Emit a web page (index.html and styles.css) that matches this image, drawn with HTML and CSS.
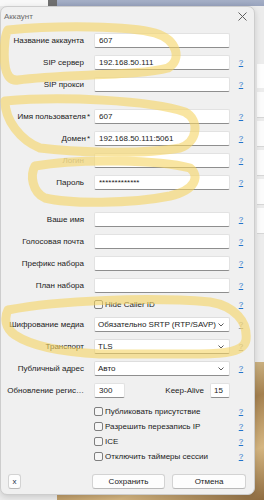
FILE: index.html
```html
<!DOCTYPE html>
<html lang="ru">
<head>
    <meta charset="UTF-8">
    <meta name="viewport" content="width=device-width, initial-scale=1.0">
    <title>Аккаунт</title>
    <link rel="stylesheet" href="styles.css">
</head>
<body>
    <div class="dialog">
        <div class="titlebar">
            <span class="title">Аккаунт</span>
            <svg class="close" width="9" height="9" viewBox="0 0 9 9">
                <path d="M0.5 0.5 L8.5 8.5 M8.5 0.5 L0.5 8.5" stroke="#5f5f5f" stroke-width="1"/>
            </svg>
        </div>

        <div class="form">
            <div class="row">
                <label class="lbl">Название аккаунта</label>
                <input class="inp" type="text" value="607">
                <span class="help"></span>
            </div>
            <div class="row">
                <label class="lbl">SIP сервер</label>
                <input class="inp" type="text" value="192.168.50.111">
                <a class="help" href="#">?</a>
            </div>
            <div class="row">
                <label class="lbl">SIP прокси</label>
                <input class="inp" type="text" value="">
                <a class="help" href="#">?</a>
            </div>

            <div class="row group-user">
                <label class="lbl">Имя пользователя<span class="req">*</span></label>
                <input class="inp" type="text" value="607">
                <a class="help" href="#">?</a>
            </div>
            <div class="row">
                <label class="lbl">Домен<span class="req">*</span></label>
                <input class="inp" type="text" value="192.168.50.111:5061">
                <a class="help" href="#">?</a>
            </div>
            <div class="row">
                <label class="lbl disabled">Логин</label>
                <input class="inp" type="text" value="">
                <a class="help" href="#">?</a>
            </div>
            <div class="row">
                <label class="lbl">Пароль</label>
                <input class="inp" type="text" value="*************">
                <a class="help" href="#">?</a>
            </div>

            <div class="row group-extra">
                <label class="lbl">Ваше имя</label>
                <input class="inp" type="text" value="">
                <a class="help" href="#">?</a>
            </div>
            <div class="row">
                <label class="lbl">Голосовая почта</label>
                <input class="inp" type="text" value="">
                <a class="help" href="#">?</a>
            </div>
            <div class="row">
                <label class="lbl">Префикс набора</label>
                <input class="inp" type="text" value="">
                <a class="help" href="#">?</a>
            </div>
            <div class="row">
                <label class="lbl">План набора</label>
                <input class="inp" type="text" value="">
                <a class="help" href="#">?</a>
            </div>

            <div class="row short">
                <span class="lbl"></span>
                <label class="check"><span class="box"></span>Hide Caller ID</label>
                <a class="help" href="#">?</a>
            </div>
            <div class="row after-check">
                <label class="lbl">Шифрование медиа</label>
                <div class="select"><span>Обязательно SRTP (RTP/SAVP)</span><svg width="6" height="4" viewBox="0 0 6 4"><path d="M0.5 0.5 L3 3 L5.5 0.5" fill="none" stroke="#5a5a5a"/></svg></div>
                <span class="help off">?</span>
            </div>
            <div class="row">
                <label class="lbl">Транспорт</label>
                <div class="select"><span>TLS</span><svg width="6" height="4" viewBox="0 0 6 4"><path d="M0.5 0.5 L3 3 L5.5 0.5" fill="none" stroke="#5a5a5a"/></svg></div>
                <span class="help off">?</span>
            </div>
            <div class="row">
                <label class="lbl">Публичный адрес</label>
                <div class="select"><span>Авто</span><svg width="6" height="4" viewBox="0 0 6 4"><path d="M0.5 0.5 L3 3 L5.5 0.5" fill="none" stroke="#5a5a5a"/></svg></div>
                <a class="help" href="#">?</a>
            </div>
            <div class="row">
                <label class="lbl" title="Обновление регистрации">Обновление регис…</label>
                <div class="pair">
                    <input class="inp small" type="text" value="300">
                    <label class="ka">Keep-Alive</label>
                    <input class="inp tiny" type="text" value="15">
                </div>
                <span class="help"></span>
            </div>

            <div class="checks">
                <div class="row short">
                    <span class="lbl"></span>
                    <label class="check"><span class="box"></span>Публиковать присутствие</label>
                    <a class="help" href="#">?</a>
                </div>
                <div class="row short">
                    <span class="lbl"></span>
                    <label class="check"><span class="box"></span>Разрешить перезапись IP</label>
                    <a class="help" href="#">?</a>
                </div>
                <div class="row short">
                    <span class="lbl"></span>
                    <label class="check"><span class="box"></span>ICE</label>
                    <a class="help" href="#">?</a>
                </div>
                <div class="row short">
                    <span class="lbl"></span>
                    <label class="check"><span class="box"></span>Отключить таймеры сессии</label>
                    <a class="help" href="#">?</a>
                </div>
            </div>
        </div>

        <div class="footer">
            <button class="btn btn-x">x</button>
            <button class="btn btn-save">Сохранить</button>
            <button class="btn">Отмена</button>
        </div>
    </div>

    <!-- marker highlights drawn over the screenshot -->
    <svg class="marker" width="264" height="500" viewBox="0 0 264 500">
        <g fill="none" stroke="#f6d563" stroke-width="9" stroke-linecap="round" stroke-linejoin="round" opacity="0.6">
            <path d="M8 30 C60 25, 130 26, 155 33 C178 40, 182 60, 168 68 C140 76, 60 74, 18 80 C4 82, 3 60, 5 40 C6 34, 7 31, 8 30"/>
            <path d="M5 101 C60 96, 150 100, 185 112 C200 120, 198 142, 180 148 C140 155, 70 152, 40 148 C20 140, 5 120, 5 101"/>
            <path d="M35 166 C80 158, 160 160, 190 168 C200 176, 196 190, 170 196 C130 204, 70 204, 45 198 C32 192, 30 175, 35 166"/>
            <path d="M8 310 C60 300, 150 297, 210 302 C235 306, 248 322, 246 340 C244 352, 225 354, 200 354 L100 354 C60 352, 30 345, 15 335 C5 328, 4 318, 8 310"/>
        </g>
    </svg>
</body>
</html>
```

FILE: styles.css
```css
* {
    box-sizing: border-box;
    margin: 0;
    padding: 0;
}

body {
    width: 264px;
    height: 500px;
    overflow: hidden;
    font-family: "Liberation Sans", Arial, sans-serif;
    font-size: 8px;
    color: #1b1b1b;
    background:
        linear-gradient(#f8f8f8, #f8f8f8) 0 0 / 48px 6px no-repeat,
        linear-gradient(#707070, #707070) 48px 0 / 9px 6px no-repeat,
        linear-gradient(#a5afc6, #98a3bd) 57px 0 / 207px 6px no-repeat,
        linear-gradient(#fdfdfd, #fdfdfd) 257px 64px / 7px 24px no-repeat,
        repeating-linear-gradient(#fbfbfb 0 25px, #d6d6d6 25px 26px, #ebebeb 26px 29px) 257px 92px / 7px 145px no-repeat,
        linear-gradient(160deg, #c7a46c 0%, #e2cf9f 25%, #a4804f 50%, #d5b681 75%, #8e6b40 100%) 57px 362px / 207px 138px no-repeat,
        #ececec;
}

.dialog {
    margin-top: 6px;
    width: 255px;
    height: 489px;
    background-color: #f0f0f0;
    border: 1px solid #cdcdcd;
    border-radius: 7px;
    box-shadow: 0 2px 6px rgba(0,0,0,0.15);
    display: flex;
    flex-direction: column;
}

.titlebar {
    height: 18px;
    display: flex;
    align-items: center;
    justify-content: space-between;
    padding: 0 7px 0 3px;
}

.title {
    color: #6c6c6c;
}

.form {
    display: flex;
    flex-direction: column;
    gap: 7px;
    padding: 8px 0 0 5px;
}

.row {
    display: flex;
    align-items: center;
    height: 15px;
}

.row.short {
    height: 9px;
}

.group-user {
    margin-top: 10px;
}

.group-extra {
    margin-top: 15px;
}

.after-check {
    margin-top: 1px;
}

.lbl {
    width: 78px;
    margin-right: 10px;
    text-align: right;
    white-space: nowrap;
}

.lbl.disabled {
    color: #a9a9a9;
}

.req {
    margin-right: -6px;
    padding-left: 1px;
}

.inp {
    width: 136px;
    height: 15px;
    background-color: #fff;
    border: 1px solid #e2e2e2;
    border-bottom-color: #8e8e8e;
    border-radius: 2px;
    padding: 0 4px;
    font: inherit;
    color: #1b1b1b;
    outline: none;
}

.inp.small {
    width: 31px;
}

.inp.tiny {
    width: 20px;
    padding: 0 3px;
}

.pair {
    width: 136px;
    display: flex;
    align-items: center;
}

.ka {
    margin-left: auto;
    margin-right: 6px;
}

.select {
    width: 136px;
    height: 15px;
    background-color: #fff;
    border: 1px solid #dedede;
    border-bottom-color: #8e8e8e;
    border-radius: 2px;
    padding: 0 5px 0 3px;
    display: flex;
    align-items: center;
    justify-content: space-between;
    white-space: nowrap;
}

.help {
    width: 22px;
    text-align: center;
    color: #2174cc;
    text-decoration: underline;
}

.help.off {
    color: #a6a6a6;
}

.check {
    width: 136px;
    display: flex;
    align-items: center;
    white-space: nowrap;
}

.box {
    width: 9px;
    height: 9px;
    margin-right: 2px;
    background-color: #f6f6f6;
    border: 1px solid #7e7e7e;
    border-radius: 2px;
}

.checks {
    display: flex;
    flex-direction: column;
    gap: 6px;
    margin-top: 2px;
}

.footer {
    display: flex;
    align-items: center;
    margin-top: 13px;
    padding: 0 8px 0 7px;
}

.btn {
    height: 15px;
    width: 74px;
    background-color: #fdfdfd;
    border: 1px solid #d3d3d3;
    border-bottom-color: #b9b9b9;
    border-radius: 3px;
    font: inherit;
    color: #1b1b1b;
}

.btn-x {
    width: 13px;
    color: #25324a;
}

.btn-save {
    width: 73px;
    margin-left: auto;
    margin-right: 7px;
}

.marker {
    position: absolute;
    top: 0;
    left: 0;
    pointer-events: none;
}
```
